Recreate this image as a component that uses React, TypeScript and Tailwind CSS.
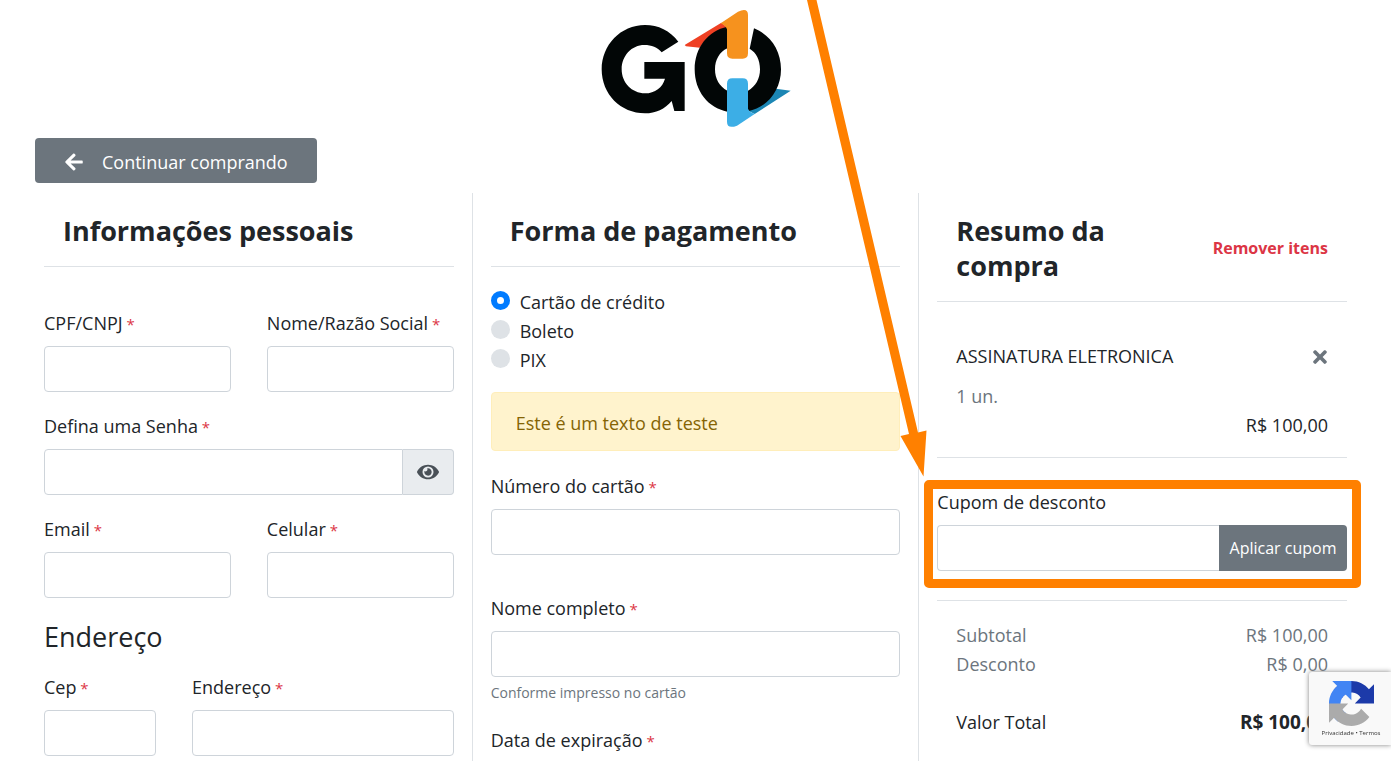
import { useId, useState, type ReactNode } from "react";
import { FaArrowLeft, FaEye, FaTimes } from "react-icons/fa";

const INPUT =
  "block h-[46px] w-full min-w-0 rounded border border-[#ced4da] bg-white px-3 outline-none focus:border-[#80bdff]";

function Required() {
  return <span className="text-[15px] text-[#dc3545]"> *</span>;
}

function Label({ htmlFor, required, children }: { htmlFor: string; required?: boolean; children: ReactNode }) {
  return (
    <label htmlFor={htmlFor} className="mb-2 block h-[29px] whitespace-nowrap">
      {children}
      {required && <Required />}
    </label>
  );
}

function Field({ label, className = "" }: { label: string; className?: string }) {
  const id = useId();
  return (
    <div className={className}>
      <Label htmlFor={id} required>
        {label}
      </Label>
      <input id={id} className={INPUT} />
    </div>
  );
}

function ColumnHeader({ title, action }: { title: string; action?: ReactNode }) {
  return (
    <div className="flex items-center justify-between gap-4 border-b border-[#dee2e6] px-[19px] pt-5 pb-[18px]">
      <h2 className={action ? "w-[180px] text-[27px] leading-[35px] font-bold" : "text-[27px] leading-[35px] font-bold"}>
        {title}
      </h2>
      {action}
    </div>
  );
}

function Logo() {
  return (
    <svg viewBox="30 24 576 360" className="h-[120px] w-[192px]" role="img" aria-label="GO">
      <path
        fill="#020606"
        d="M265 125C240 92 205 75 165 75C92 75 35 135 35 208C35 283 92 340 165 340C197 340 225 327 245 303L253 333H284V186H163V236H225C218 262 195 280 165 280C125 280 95 248 95 208C95 167 125 135 163 135C185 135 202 142 215 157Z"
      />
      <path fill="#ef4023" d="M284 135L394 68L414 84C380 92 345 116 330 143L288 139Z" />
      <path fill="#1b86b4" d="M558 266L602 272L494 342L474 332C510 322 540 302 558 266Z" />
      <path
        fill="#020606"
        d="M412 80C355 92 314 142 314 208C314 274 355 324 412 335V272C388 260 375 236 375 208C375 180 388 156 412 145ZM492 85C540 104 573 150 573 208C573 270 534 322 474 334V272C497 260 510 236 510 208C510 180 499 158 479 146Z"
      />
      <path fill="#f6921e" d="M392 70L444 35Q474 22 474 45V160Q474 176 458 176H427Q411 176 411 160V88Q407 76 392 70Z" />
      <path fill="#3caee6" d="M427 235H458Q474 235 474 251V326Q480 340 495 341L441 377Q411 388 411 365V251Q411 235 427 235Z" />
    </svg>
  );
}

function RecaptchaLogo() {
  return (
    <svg viewBox="0 0 64 64" className="size-[45px]" aria-hidden="true">
      <path
        fill="#1c3aa9"
        d="M64 31.955l-.033-1.37V4.687l-7.16 7.16C50.948 4.674 42.033.093 32.05.093c-10.4 0-19.622 4.96-25.458 12.64l11.736 11.86a15.55 15.55 0 0 1 4.754-5.334c2.05-1.6 4.952-2.906 8.968-2.906.485 0 .86.057 1.135.163 4.976.393 9.288 3.14 11.828 7.124l-8.307 8.307L64 31.953"
      />
      <path
        fill="#4285f4"
        d="M31.862.094l-1.37.033H4.594l7.16 7.16C4.58 13.147 0 22.06 0 32.046c0 10.4 4.96 19.622 12.64 25.458L24.5 45.768a15.55 15.55 0 0 1-5.334-4.754c-1.6-2.05-2.906-4.952-2.906-8.968 0-.485.057-.86.163-1.135.393-4.976 3.14-9.288 7.124-11.828l8.307 8.307L31.86.095"
      />
      <path
        fill="#ababab"
        d="M.001 32.045l.033 1.37v25.898l7.16-7.16c5.86 7.173 14.774 11.754 24.76 11.754 10.4 0 19.622-4.96 25.458-12.64l-11.736-11.86a15.55 15.55 0 0 1-4.754 5.334c-2.05 1.6-4.952 2.906-8.968 2.906-.485 0-.86-.057-1.135-.163-4.976-.393-9.288-3.14-11.828-7.124l8.307-8.307c-10.522.04-22.4.066-27.295-.005"
      />
    </svg>
  );
}

function PersonalInfo() {
  return (
    <section className="border-r border-[#dee2e6] px-[18px]">
      <ColumnHeader title="Informações pessoais" />
      <div className="mt-[42px] grid grid-cols-2 gap-x-9 gap-y-5">
        <Field label="CPF/CNPJ" />
        <Field label="Nome/Razão Social" />
        <div className="col-span-2">
          <Label htmlFor="senha" required>
            Defina uma Senha
          </Label>
          <div className="flex">
            <input
              id="senha"
              type="password"
              className="h-[46px] min-w-0 flex-1 rounded-l border border-[#ced4da] bg-white px-3 outline-none"
            />
            <button
              type="button"
              aria-label="Mostrar senha"
              className="flex h-[46px] w-[51px] items-center justify-center rounded-r border border-l-0 border-[#ced4da] bg-[#e9ecef] text-[22px] text-[#495057]"
            >
              <FaEye />
            </button>
          </div>
        </div>
        <Field label="Email" />
        <Field label="Celular" />
      </div>
      <h3 className="mt-[21px] mb-[19px] text-[27px] leading-[35px]">Endereço</h3>
      <div className="flex gap-9">
        <Field label="Cep" className="w-[112px]" />
        <Field label="Endereço" className="min-w-0 flex-1" />
      </div>
    </section>
  );
}

const METHODS = ["Cartão de crédito", "Boleto", "PIX"];

function Payment() {
  const [method, setMethod] = useState(METHODS[0]);
  return (
    <section className="border-r border-[#dee2e6] px-[18px]">
      <ColumnHeader title="Forma de pagamento" />
      <div className="mt-[21px]">
        {METHODS.map((name) => (
          <label key={name} className="flex items-start gap-[10px]">
            <input
              type="radio"
              name="pagamento"
              checked={method === name}
              onChange={() => setMethod(name)}
              className="mt-[3px] size-[19px] appearance-none rounded-full bg-[#dee2e6] checked:border-[6px] checked:border-[#007bff] checked:bg-white"
            />
            {name}
          </label>
        ))}
      </div>
      <div
        role="alert"
        className="mt-[17px] mb-[21px] rounded border border-[#ffeeba] bg-[#fff3cd] px-6 pt-4 pb-3 text-[#856404]"
      >
        Este é um texto de teste
      </div>
      <Field label="Número do cartão" className="mb-[39px]" />
      <Field label="Nome completo" />
      <p className="mt-1 mb-[21px] text-sm leading-6 text-[#6c757d]">Conforme impresso no cartão</p>
      <p className="whitespace-nowrap">
        Data de expiração
        <Required />
      </p>
    </section>
  );
}

function CouponHighlight() {
  return (
    <>
      <div className="pointer-events-none absolute -top-2 -right-[14px] -bottom-[17px] -left-[13px] rounded-[5px] border-[9px] border-[#ff8000]" />
      <svg
        viewBox="800 0 130 480"
        className="pointer-events-none absolute -top-[488px] -left-[137px] h-[480px] w-[130px]"
        aria-hidden="true"
      >
        <path fill="#ff8000" d="M807 0H816.500L918 432.500L926.500 430.500L923.500 476.500L900.500 436L909 434Z" />
      </svg>
    </>
  );
}

function Summary() {
  return (
    <section className="pr-[19px] pl-[18px]">
      <ColumnHeader
        title="Resumo da compra"
        action={
          <button type="button" className="text-base font-bold whitespace-nowrap text-[#dc3545]">
            Remover itens
          </button>
        }
      />
      <div className="border-b border-[#dee2e6] px-[19px] pt-10 pb-[17px]">
        <div className="flex items-center justify-between">
          <span>ASSINATURA ELETRONICA</span>
          <button type="button" aria-label="Remover item" className="text-xl text-[#6c757d]">
            <FaTimes className="-mr-[2px]" />
          </button>
        </div>
        <p className="mt-[11px] text-[#6c757d]">1 un.</p>
        <p className="text-right">R$ 100,00</p>
      </div>
      <div className="relative mt-[30px] mb-[29px]">
        <Label htmlFor="cupom">Cupom de desconto</Label>
        <div className="flex">
          <input
            id="cupom"
            className="h-[46px] min-w-0 flex-1 rounded-l border border-r-0 border-[#ced4da] bg-white px-3 outline-none"
          />
          <button type="button" className="h-[46px] w-32 rounded-r bg-[#6c757d] text-base whitespace-nowrap text-white">
            Aplicar cupom
          </button>
        </div>
        <CouponHighlight />
      </div>
      <dl className="grid grid-cols-2 border-t border-[#dee2e6] px-[19px] pt-5 text-[#6c757d]">
        <dt>Subtotal</dt>
        <dd className="text-right">R$ 100,00</dd>
        <dt>Desconto</dt>
        <dd className="text-right">R$ 0,00</dd>
        <dt className="mt-[29px] text-[#212529]">Valor Total</dt>
        <dd className="mt-[29px] text-right text-[19px] font-bold text-[#212529]">R$ 100,00</dd>
      </dl>
    </section>
  );
}

export default function App() {
  return (
    <div className="flex min-h-screen flex-col overflow-hidden bg-white pr-[25px] pl-[26px] font-['Open_Sans','Noto_Sans',sans-serif] text-[18px] leading-[29px] text-[#212529]">
      <header className="flex flex-col items-center pt-2">
        <Logo />
        <a
          href="#"
          className="mt-[10px] mb-[10px] ml-[9px] flex h-[45px] items-center gap-[18px] self-start rounded bg-[#6c757d] px-[29px] pt-[3px] text-white"
        >
          <FaArrowLeft className="text-[20px]" />
          Continuar comprando
        </a>
      </header>
      <main className="grid flex-1 grid-cols-3">
        <PersonalInfo />
        <Payment />
        <Summary />
      </main>
      <aside className="fixed right-0 bottom-4 flex h-[73px] w-[82px] flex-col items-center rounded-l-[3px] bg-[#f9f9f9] pt-[9px] pl-[2px] shadow-[0_0_5px_gray]">
        <RecaptchaLogo />
        <p className="mt-[3px] text-[6px] leading-2 font-medium whitespace-nowrap text-[#333]">
          <a href="#">Privacidade</a> • <a href="#">Termos</a>
        </p>
      </aside>
    </div>
  );
}
